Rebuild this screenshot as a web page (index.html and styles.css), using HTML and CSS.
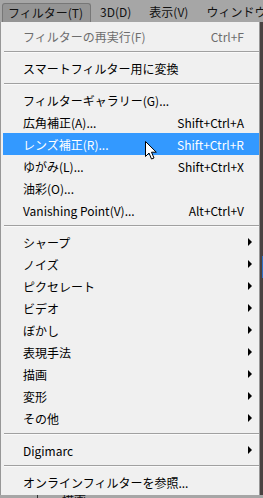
FILE: index.html
```html
<!DOCTYPE html>
<html lang="ja">
<head>
  <meta charset="UTF-8">
  <title>フィルター</title>
  <link rel="stylesheet" href="styles.css">
</head>
<body>
  <div class="menubar">
    <div class="menubar-item active">フィルター(T)</div>
    <div class="menubar-item">3D(D)</div>
    <div class="menubar-item">表示(V)</div>
    <div class="menubar-item">ウィンドウ(W)</div>
  </div>

  <div class="screen">
    <div class="menu">
      <div class="item disabled"><span class="label">フィルターの再実行(F)</span><span class="key">Ctrl+F</span></div>
      <div class="sep"></div>
      <div class="item"><span class="label">スマートフィルター用に変換</span></div>
      <div class="sep"></div>
      <div class="item"><span class="label">フィルターギャラリー(G)...</span></div>
      <div class="item"><span class="label">広角補正(A)...</span><span class="key">Shift+Ctrl+A</span></div>
      <div class="item selected"><span class="label">レンズ補正(R)...</span><span class="key">Shift+Ctrl+R</span></div>
      <div class="item"><span class="label">ゆがみ(L)...</span><span class="key">Shift+Ctrl+X</span></div>
      <div class="item"><span class="label">油彩(O)...</span></div>
      <div class="item"><span class="label">Vanishing Point(V)...</span><span class="key">Alt+Ctrl+V</span></div>
      <div class="sep"></div>
      <div class="item sub"><span class="label">シャープ</span><span class="arrow"></span></div>
      <div class="item sub"><span class="label">ノイズ</span><span class="arrow"></span></div>
      <div class="item sub"><span class="label">ピクセレート</span><span class="arrow"></span></div>
      <div class="item sub"><span class="label">ビデオ</span><span class="arrow"></span></div>
      <div class="item sub"><span class="label">ぼかし</span><span class="arrow"></span></div>
      <div class="item sub"><span class="label">表現手法</span><span class="arrow"></span></div>
      <div class="item sub"><span class="label">描画</span><span class="arrow"></span></div>
      <div class="item sub"><span class="label">変形</span><span class="arrow"></span></div>
      <div class="item sub"><span class="label">その他</span><span class="arrow"></span></div>
      <div class="sep"></div>
      <div class="item sub"><span class="label">Digimarc</span><span class="arrow"></span></div>
      <div class="sep"></div>
      <div class="item"><span class="label">オンラインフィルターを参照...</span></div>
    </div>
    <div class="side">
      <div class="side-mark"></div>
    </div>
  </div>

  <div class="below">
    <div class="below-line"></div>
    <div class="below-text">描画</div>
  </div>

  <svg class="cursor" width="13" height="20" viewBox="0 0 13 20">
    <path d="M0.5 0.5 L0.5 15.5 L4 12 L6.5 18 L9 17 L6.5 11.2 L11.3 11.2 Z" fill="#fff" stroke="#000" stroke-width="1"/>
  </svg>
</body>
</html>
```

FILE: styles.css
```css
* {
  margin: 0;
  padding: 0;
  box-sizing: border-box;
}

body {
  width: 263px;
  height: 498px;
  overflow: hidden;
  position: relative;
  background-color: #3f3a3a;
  font-family: "Noto Sans CJK JP", "Noto Sans", sans-serif;
  font-size: 12px;
  color: #000;
}

/* Menu bar */
.menubar {
  display: flex;
  align-items: flex-end;
  height: 22px;
  padding-left: 2px;
  background-color: #a6a6a6;
  white-space: nowrap;
  overflow: hidden;
}

.menubar-item {
  height: 19px;
  line-height: 18px;
  padding: 0 9px;
  color: #111;
}

.menubar-item.active {
  padding: 0 7px 0 5px;
  background-color: #959595;
  border: 1px solid #777;
  border-bottom: none;
  border-radius: 3px 3px 0 0;
  margin-right: 0;
}

/* Dropdown */
.screen {
  display: flex;
}

.menu {
  width: 260px;
  padding: 3px 0 2px;
  background-color: #f0f0f0;
  border-left: 1px solid #979797;
  border-right: 1px solid #979797;
}

.item {
  display: flex;
  align-items: center;
  height: 22px;
  margin: 0 0 0 2px;
  padding: 0 15px 0 20px;
  white-space: nowrap;
}

.item .label {
  flex: 1;
}

.item .key {
  text-align: right;
}

.item.disabled {
  color: #6d6d6d;
}

.item.selected {
  background-color: #3399ff;
  color: #fff;
}

.item.sub {
  padding-right: 7px;
}

.arrow {
  width: 0;
  height: 0;
  border-top: 4px solid transparent;
  border-bottom: 4px solid transparent;
  border-left: 4px solid #000;
}

.sep {
  height: 10px;
  margin: 0 0 0 3px;
  padding-top: 4px;
}

.sep::after {
  content: "";
  display: block;
  height: 1px;
  background-color: #a0a0a0;
  border-bottom: 1px solid #fafafa;
  box-sizing: content-box;
}

.side {
  flex: 1;
  position: relative;
  background-color: #4a4242;
}

.side-mark {
  margin-top: 234px;
  margin-left: 2px;
  width: 1px;
  height: 22px;
  background-color: #2f6fc4;
}

/* Bottom strip under the menu */
.below {
  display: flex;
  height: 4px;
  background-color: #a6a6a6;
  overflow: hidden;
}

.below-line {
  width: 1px;
  margin-left: 37px;
  background-color: #333;
}

.below-text {
  margin-left: 24px;
  line-height: 4px;
  padding-top: 3px;
  color: #111;
}

.cursor {
  position: absolute;
  left: 145px;
  top: 141px;
}
```
